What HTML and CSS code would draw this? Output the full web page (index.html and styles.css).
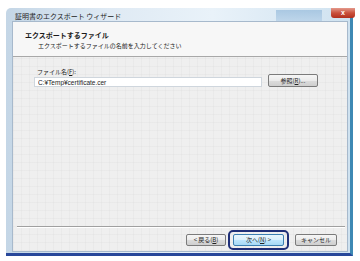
FILE: index.html
```html
<!DOCTYPE html>
<html lang="ja">
<head>
    <meta charset="UTF-8">
    <meta name="viewport" content="width=device-width, initial-scale=1.0">
    <title>証明書のエクスポート ウィザード</title>
    <link rel="stylesheet" href="styles.css">
</head>
<body>
    <div class="window">
        <div class="titlebar">
            <span class="title">証明書のエクスポート ウィザード</span>
            <span class="glare"></span>
            <span class="close">x</span>
        </div>
        <div class="panel">
            <div class="header">
                <div class="header-title">エクスポートするファイル</div>
                <div class="header-sub">エクスポートするファイルの名前を入力してください</div>
            </div>
            <div class="body">
                <div class="field">
                    <label for="fileName">ファイル名(<u>F</u>):</label>
                    <div class="field-row">
                        <input type="text" id="fileName" class="file-input" value="C:¥Temp¥certificate.cer">
                        <button type="button" class="btn btn-browse">参照(<u>R</u>)...</button>
                    </div>
                </div>
                <div class="spacer"></div>
                <div class="separator"></div>
                <div class="actions">
                    <button type="button" class="btn btn-back">&lt; 戻る(<u>B</u>)</button>
                    <div class="focus-ring">
                        <button type="button" class="btn btn-next">次へ(<u>N</u>) &gt;</button>
                    </div>
                    <button type="button" class="btn btn-cancel">キャンセル</button>
                </div>
            </div>
        </div>
    </div>
</body>
</html>
```

FILE: styles.css
```css
body {
    margin: 0;
    background-color: #fff;
    font-family: "Noto Sans CJK JP", "Liberation Sans", sans-serif;
    color: #1a1a1a;
}
.window {
    box-sizing: border-box;
    width: 347px;
    height: 248px;
    margin: 8px 0 0 6px;
    padding: 0 2px 1px 6px;
    display: flex;
    flex-direction: column;
    border-right: 3px solid #3d89b4;
    border-bottom: 3px solid #28479a;
    border-radius: 5px 5px 0 0;
    background: linear-gradient(90deg, #c4d6e6 0%, #dfeaf4 30%, #e9f2f9 60%, #cfe2f0 100%);
}
.titlebar {
    height: 13px;
    display: flex;
    align-items: center;
    position: relative;
}
.title {
    font-size: 7px;
    color: #222;
    margin-left: 3px;
    margin-top: 3px;
}
.glare {
    position: absolute;
    left: 264px;
    top: 2px;
    width: 46px;
    height: 11px;
    background: linear-gradient(180deg, #9ec0de, #b7d1e8);
    opacity: 0.8;
}
.close {
    position: absolute;
    left: 319px;
    top: 0;
    width: 24px;
    height: 10px;
    border-radius: 0 0 3px 3px;
    background: linear-gradient(180deg, #e49a8c 0%, #c9503c 50%, #b22f1d 100%);
    color: #fff;
    font-family: "Liberation Sans", sans-serif;
    font-size: 7px;
    font-weight: bold;
    line-height: 9px;
    text-align: center;
}
.panel {
    flex: 1;
    display: flex;
    flex-direction: column;
    border: 1px solid #a7b9cc;
    background-color: #efefef;
}
.header {
    height: 35px;
    box-sizing: border-box;
    padding: 8px 0 0 12px;
    background-color: #f7f7f7;
    border-bottom: 1px solid #a8a8a8;
}
.header-title {
    font-size: 7px;
    font-weight: bold;
    line-height: 10px;
}
.header-sub {
    font-size: 6px;
    line-height: 10px;
    margin-left: 13px;
    margin-top: 1px;
}
.body {
    flex: 1;
    display: flex;
    flex-direction: column;
    background-color: #efefef;
    background-image:
        repeating-linear-gradient(90deg, rgba(0,0,0,0.025) 0 1px, transparent 1px 8px),
        repeating-linear-gradient(0deg, rgba(0,0,0,0.025) 0 1px, transparent 1px 8px);
}
.field {
    margin: 10px 0 0 21px;
}
.field label {
    display: block;
    font-size: 6px;
    line-height: 9px;
    margin-left: 3px;
}
.field u, .btn u {
    text-decoration: underline;
}
.field-row {
    display: flex;
    align-items: center;
    gap: 6px;
    margin-top: 1px;
}
.file-input {
    box-sizing: border-box;
    width: 228px;
    height: 10px;
    padding: 0 3px;
    border: 1px solid #cfd6dd;
    background: #fff;
    font-family: "Liberation Sans", sans-serif;
    font-size: 6.5px;
    color: #222;
}
.btn {
    box-sizing: border-box;
    height: 12px;
    padding: 0;
    border: 1px solid #7b7b7b;
    border-radius: 2px;
    background: linear-gradient(180deg, #f6f6f6 0%, #ebebeb 50%, #dcdcdc 51%, #cfcfcf 100%);
    font-family: "Noto Sans CJK JP", "Liberation Sans", sans-serif;
    font-size: 6px;
    line-height: 10px;
    color: #222;
}
.btn-browse {
    width: 50px;
    height: 13px;
    margin-top: -3px;
}
.spacer {
    flex: 1;
}
.separator {
    height: 0;
    margin: 0 2px 0 4px;
    border-top: 1px solid #a0a0a0;
    border-bottom: 1px solid #fff;
}
.actions {
    display: flex;
    justify-content: flex-end;
    align-items: center;
    padding: 2px 10px 1px 0;
}
.btn-back {
    width: 40px;
}
.focus-ring {
    margin: 0 6px 0 2px;
    padding: 2px 3px;
    border: 2px solid #1f2f78;
    border-radius: 5px;
}
.btn-next {
    display: block;
    width: 51px;
    border-color: #3c7fb1;
    background: linear-gradient(180deg, #eaf6fd 0%, #d9f0fc 50%, #bee6fd 51%, #a7d9f5 100%);
}
.btn-cancel {
    width: 42px;
}
```
